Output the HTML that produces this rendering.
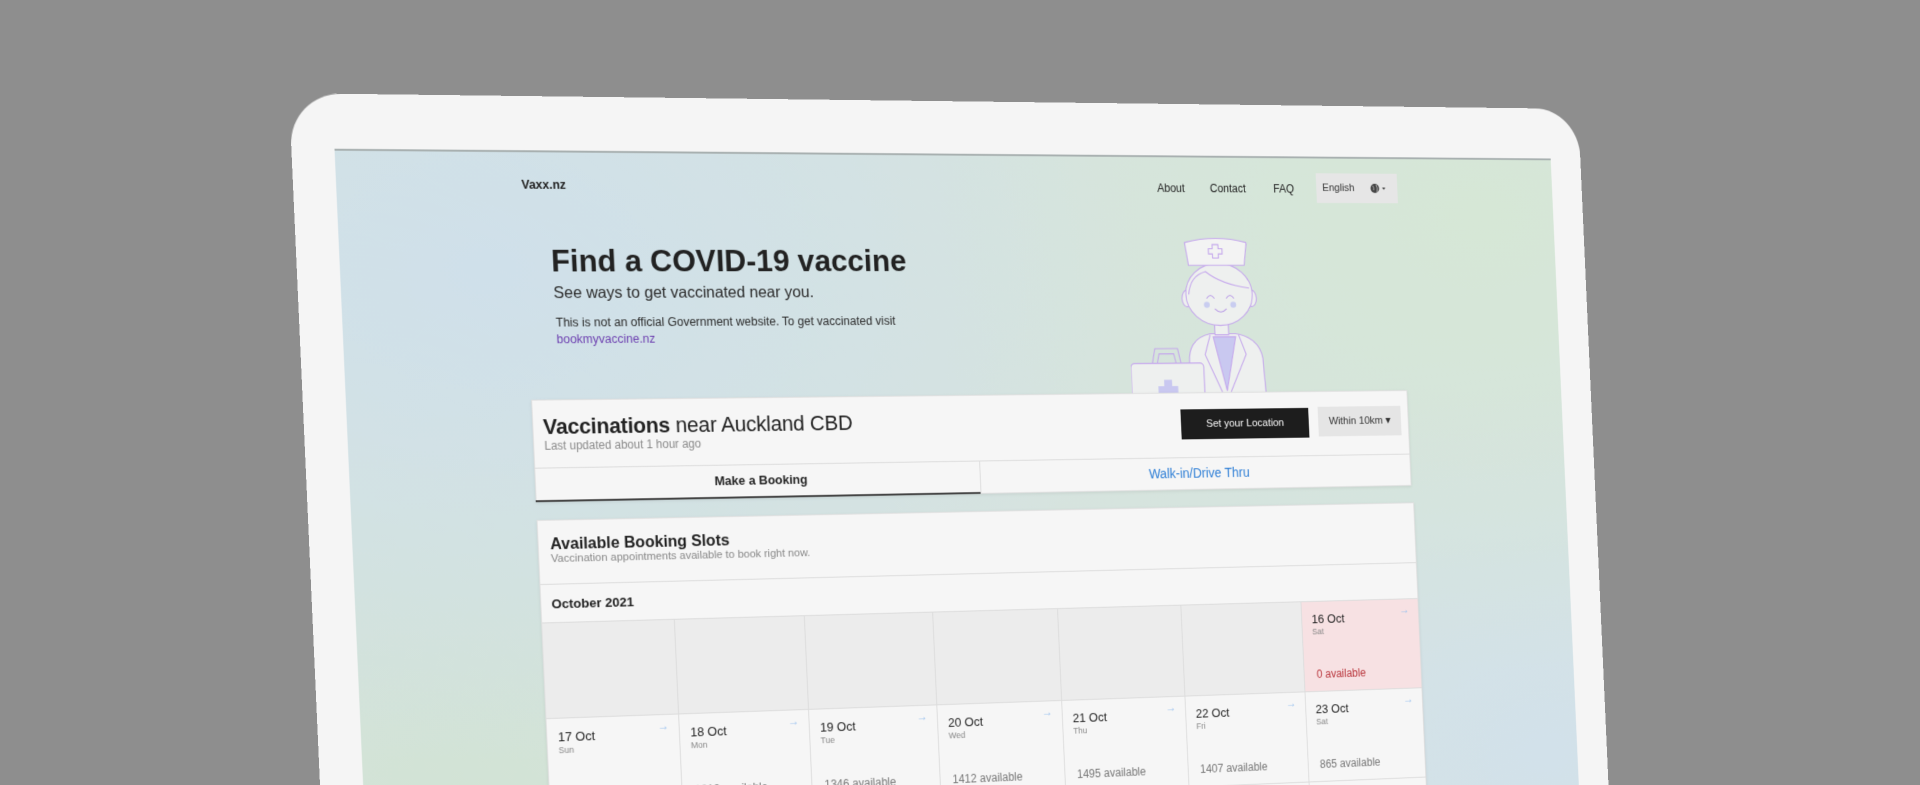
<!DOCTYPE html>
<html style="width:1920px;height:785px;overflow:hidden;"><head><meta charset="utf-8">
<style>
html,body{margin:0;padding:0;}
body{width:1920px;height:785px;overflow:hidden;background:#8e8e8e;position:relative;font-family:"Liberation Sans",Arial,sans-serif;}
#clip{position:absolute;left:0;top:0;width:1920px;height:785px;overflow:hidden;}
#plane{position:absolute;left:0;top:0;width:1338px;height:800px;transform-origin:0 0;
transform:matrix3d(1.02532,0.019215,0,0.00007506,0.045,1,0,0,0,0,1,0,334.5,148.7,0,1);}
#frame{position:absolute;left:-43px;top:-55px;width:1417px;height:900px;background:#f5f5f5;border-radius:52px;}
#screen{position:absolute;left:0;top:0;width:1338px;height:800px;overflow:hidden;border-top:2px solid #a8b0b0;box-sizing:border-box;
background:
radial-gradient(ellipse 700px 500px at 150px 120px,#cfe0ea 0%,rgba(207,224,234,0) 100%),
radial-gradient(ellipse 700px 500px at 1250px 60px,#d6e7d6 0%,rgba(214,231,214,0) 100%),
radial-gradient(ellipse 600px 400px at 100px 650px,#d2e3d5 0%,rgba(210,227,213,0) 100%),
radial-gradient(ellipse 600px 450px at 1300px 650px,#d2e1ea 0%,rgba(210,225,234,0) 100%),
#d6e3df;}
.t{position:absolute;white-space:nowrap;line-height:1;}
.box{position:absolute;box-sizing:border-box;}
.cell{position:absolute;box-sizing:border-box;border-right:1px solid #dcdcdc;border-bottom:1px solid #dcdcdc;}
.cell .d{position:absolute;left:11px;top:12px;font-size:13px;line-height:1;color:#222;white-space:nowrap;}
.cell .w{position:absolute;left:11px;top:28px;font-size:9px;line-height:1;color:#888;}
.cell .a{position:absolute;right:10px;top:5px;font-size:12px;line-height:1;color:#9cc3ee;}
.cell .v{position:absolute;left:13px;top:72px;font-size:12px;line-height:1;color:#777;white-space:nowrap;}
</style></head><body>
<div id="clip">
<div id="plane">
<div id="frame"></div>
<div id="screen">
  <div class="t" style="left:188px;top:27px;font-size:12.5px;font-weight:bold;color:#222;">Vaxx.nz</div>
  <div class="t" style="left:875px;top:27px;font-size:12px;color:#222;">About</div>
  <div class="t" style="left:935px;top:27px;font-size:12px;color:#222;">Contact</div>
  <div class="t" style="left:1008px;top:27px;font-size:12px;color:#222;">FAQ</div>
  <div class="box" style="left:1058px;top:16px;width:95px;height:32px;background:#e6e6e6;"></div>
  <div class="t" style="left:1065px;top:27px;font-size:11.5px;color:#333;">English</div>
  <svg style="position:absolute;left:1121px;top:26px" width="24" height="12" viewBox="0 0 24 12">
    <circle cx="5.5" cy="6" r="5" fill="#444"/>
    <path d="M3,3 Q5,5 4,8 M7,2 Q9,5 8,10" stroke="#bbb" stroke-width="1" fill="none"/>
    <path d="M14,5 L18,5 L16,7.5 Z" fill="#444"/>
  </svg>

  <div class="t" style="left:215px;top:94px;font-size:32px;font-weight:bold;color:#222;letter-spacing:0px;">Find a COVID-19 vaccine</div>
  <div class="t" style="left:216px;top:135px;font-size:16.5px;color:#2a2a2a;">See ways to get vaccinated near you.</div>
  <div class="t" style="left:217px;top:167px;font-size:12.5px;color:#2a2a2a;">This is not an official Government website. To get vaccinated visit</div>
  <div class="t" style="left:217px;top:184px;font-size:12.5px;color:#6c3fb0;">bookmyvaccine.nz</div>

  <svg style="position:absolute;left:836px;top:82px" width="168" height="172" viewBox="0 0 150 155" preserveAspectRatio="none">
    <g stroke="#c4a6ec" stroke-width="1" fill="#eef0ef">
      <path d="M58,158 L60,118 Q62,100 82,96 L108,96 Q132,100 135,120 L137,158 Z"/>
      <polygon points="85,99 97,151 108,99" fill="#c9c8f0"/>
      <path d="M82,97 L76,116 L92,152 M111,97 L118,116 L101,152" fill="none"/>
      <rect x="87" y="84" width="14" height="13" />
      <ellipse cx="60" cy="62" rx="5" ry="8"/>
      <ellipse cx="126" cy="62" rx="5" ry="8"/>
      <ellipse cx="93" cy="58" rx="34" ry="30"/>
      <path d="M62,58 Q64,40 80,36 Q95,48 124,52" fill="none"/>
      <path d="M63,30 L60,8 Q92,0 123,8 L120,30 Z" fill="#f3f3f3"/>
      <path d="M88,10 h6 v4 h4 v5 h-4 v4 h-6 v-4 h-4 v-5 h4 Z" fill="#f3f3f3"/>
      <path d="M80,62 Q84,56 88,62 M100,62 Q104,56 108,62 M88,72 Q94,78 100,72" fill="none" stroke="#b89ae6"/>
      <rect x="0" y="124" width="74" height="36" rx="4"/>
      <path d="M22,124 L25,110 L48,110 L51,124 M27,124 L29,115 L44,115 L46,124" fill="none"/>
      <path d="M33,140 h8 v6 h6 v7 h-6 v6 h-8 v-6 h-6 v-7 h6 Z" fill="#c9c8f0" stroke="none"/>
    </g>
    <circle cx="80" cy="68" r="3" fill="#c9cdf0"/>
    <circle cx="107" cy="68" r="3" fill="#c9cdf0"/>
  </svg>

  <div class="box" style="left:188px;top:251px;width:966px;height:104px;background:#f6f6f6;border:1px solid #e0e0e0;box-shadow:0 1px 3px rgba(0,0,0,0.08);"></div>
  <div class="t" style="left:199px;top:268px;font-size:22px;color:#222;letter-spacing:-0.2px;"><b>Vaccinations</b> near Auckland CBD</div>
  <div class="t" style="left:199.5px;top:292px;font-size:12px;color:#8a8a8a;">Last updated about 1 hour ago</div>
  <div class="box" style="left:890px;top:269px;width:147px;height:32px;background:#1d1d1d;color:#fff;font-size:11.5px;line-height:32px;text-align:center;">Set your Location</div>
  <div class="box" style="left:1048px;top:268px;width:97px;height:32px;background:#e5e5e5;color:#333;font-size:11.5px;line-height:32px;text-align:center;">Within 10km &#9662;</div>
  <div class="box" style="left:188px;top:320px;width:966px;height:1px;background:#dcdcdc;"></div>
  <div class="box" style="left:188px;top:321px;width:474px;height:34px;border-bottom:2px solid #444;font-size:13px;font-weight:bold;color:#222;line-height:32px;text-align:center;">Make a Booking</div>
  <div class="box" style="left:662px;top:321px;width:1px;height:34px;background:#dcdcdc;"></div>
  <div class="box" style="left:663px;top:321px;width:491px;height:34px;font-size:14px;color:#2f7fd6;line-height:32px;text-align:center;">Walk-in/Drive Thru</div>

  <div class="box" style="left:188px;top:373px;width:968px;height:460px;background:#f6f6f6;border:1px solid #e0e0e0;box-shadow:0 1px 3px rgba(0,0,0,0.08);"></div>
  <div class="t" style="left:201px;top:390px;font-size:16.5px;font-weight:bold;color:#222;">Available Booking Slots</div>
  <div class="t" style="left:201px;top:408px;font-size:11.5px;color:#888;">Vaccination appointments available to book right now.</div>
  <div class="box" style="left:189px;top:438px;width:966px;height:1px;background:#dcdcdc;"></div>
  <div class="t" style="left:199.5px;top:452px;font-size:13.5px;font-weight:bold;color:#222;">October 2021</div>
  <div class="box" style="left:189px;top:477px;width:966px;height:1px;background:#dcdcdc;"></div>

  <div class="cell" style="left:189px;top:478px;width:138px;height:97px;background:#ececec;"></div>
  <div class="cell" style="left:327px;top:478px;width:138px;height:97px;background:#ececec;"></div>
  <div class="cell" style="left:465px;top:478px;width:139px;height:97px;background:#ececec;"></div>
  <div class="cell" style="left:604px;top:478px;width:138px;height:97px;background:#ececec;"></div>
  <div class="cell" style="left:742px;top:478px;width:139px;height:97px;background:#ececec;"></div>
  <div class="cell" style="left:881px;top:478px;width:138px;height:97px;background:#ececec;"></div>
  <div class="cell" style="left:1019px;top:478px;width:137px;height:97px;background:#f7e1e3;"><div class="d">16 Oct</div><div class="w">Sat</div><div class="a">&#8594;</div><div class="v" style="color:#b8333a;left:14px;">0 available</div></div>

  <div class="cell" style="left:189px;top:575px;width:138px;height:97px;"><div class="d">17 Oct</div><div class="w">Sun</div><div class="a">&#8594;</div><div class="v">1239 available</div></div>
  <div class="cell" style="left:327px;top:575px;width:138px;height:97px;"><div class="d">18 Oct</div><div class="w">Mon</div><div class="a">&#8594;</div><div class="v">1218 available</div></div>
  <div class="cell" style="left:465px;top:575px;width:139px;height:97px;"><div class="d">19 Oct</div><div class="w">Tue</div><div class="a">&#8594;</div><div class="v">1346 available</div></div>
  <div class="cell" style="left:604px;top:575px;width:138px;height:97px;"><div class="d">20 Oct</div><div class="w">Wed</div><div class="a">&#8594;</div><div class="v">1412 available</div></div>
  <div class="cell" style="left:742px;top:575px;width:139px;height:97px;"><div class="d">21 Oct</div><div class="w">Thu</div><div class="a">&#8594;</div><div class="v">1495 available</div></div>
  <div class="cell" style="left:881px;top:575px;width:138px;height:97px;"><div class="d">22 Oct</div><div class="w">Fri</div><div class="a">&#8594;</div><div class="v">1407 available</div></div>
  <div class="cell" style="left:1019px;top:575px;width:137px;height:97px;"><div class="d">23 Oct</div><div class="w">Sat</div><div class="a">&#8594;</div><div class="v">865 available</div></div>

  <div class="cell" style="left:189px;top:672px;width:138px;height:97px;"><div class="d">24 Oct</div><div class="w">Sun</div></div>
  <div class="cell" style="left:327px;top:672px;width:138px;height:97px;"><div class="d">25 Oct</div><div class="w">Mon</div></div>
  <div class="cell" style="left:465px;top:672px;width:139px;height:97px;"><div class="d">26 Oct</div><div class="w">Tue</div></div>
  <div class="cell" style="left:604px;top:672px;width:138px;height:97px;"><div class="d">27 Oct</div><div class="w">Wed</div></div>
  <div class="cell" style="left:742px;top:672px;width:139px;height:97px;"><div class="d">28 Oct</div><div class="w">Thu</div></div>
  <div class="cell" style="left:881px;top:672px;width:138px;height:97px;"><div class="d">29 Oct</div><div class="w">Fri</div></div>
  <div class="cell" style="left:1019px;top:672px;width:137px;height:97px;"><div class="d">30 Oct</div><div class="w">Sat</div></div>
</div>
</div>
</div>
</body></html>
